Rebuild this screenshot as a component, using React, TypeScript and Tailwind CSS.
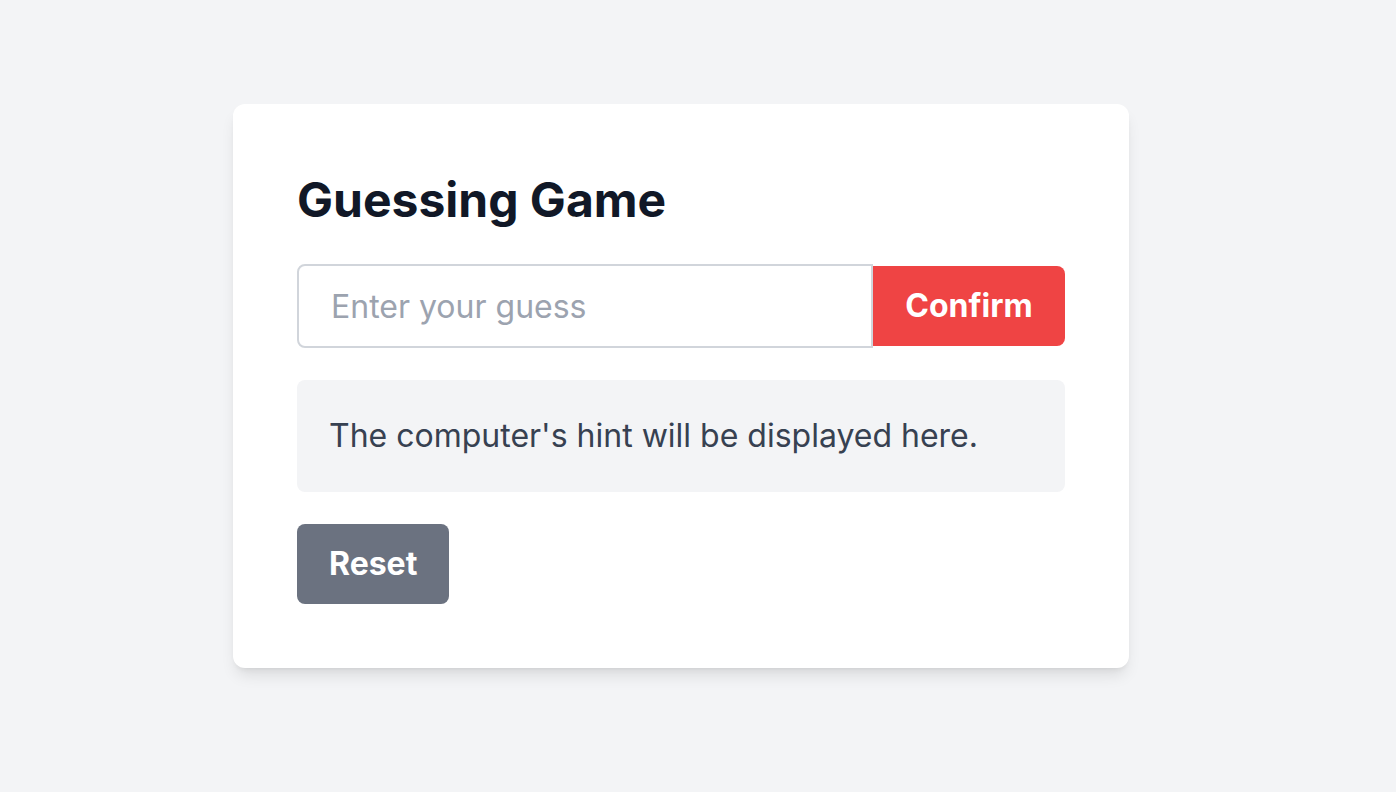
export default function App() {
  return (
    <div
      className="min-h-screen bg-[#f3f4f6] flex justify-center pt-[104px] pr-[34px]"
      style={{ fontFamily: "Inter, 'Noto Sans', sans-serif" }}
    >
      <div className="w-[896px] h-fit bg-white rounded-xl shadow-lg p-16">
        <h1 className="text-5xl leading-16 font-bold text-[#111827] mb-8">Guessing Game</h1>
        <div className="flex items-center">
          <input
            type="text"
            placeholder="Enter your guess"
            className="flex-1 min-w-0 h-[84px] border-2 border-[#d1d5db] rounded-l-lg px-8 text-[32px] text-[#374151] placeholder-[#9ca3af] outline-none"
          />
          <button className="h-20 w-48 bg-[#ef4444] text-white text-[32px] font-bold rounded-r-lg">
            Confirm
          </button>
        </div>
        <div className="mt-8 bg-[#f3f4f6] rounded-lg px-8 h-28 flex items-center">
          <p className="text-[32px] text-[#374151]">The computer's hint will be displayed here.</p>
        </div>
        <button className="mt-8 h-20 px-8 bg-[#6b7280] text-white text-[32px] font-bold rounded-lg">
          Reset
        </button>
      </div>
    </div>
  );
}
